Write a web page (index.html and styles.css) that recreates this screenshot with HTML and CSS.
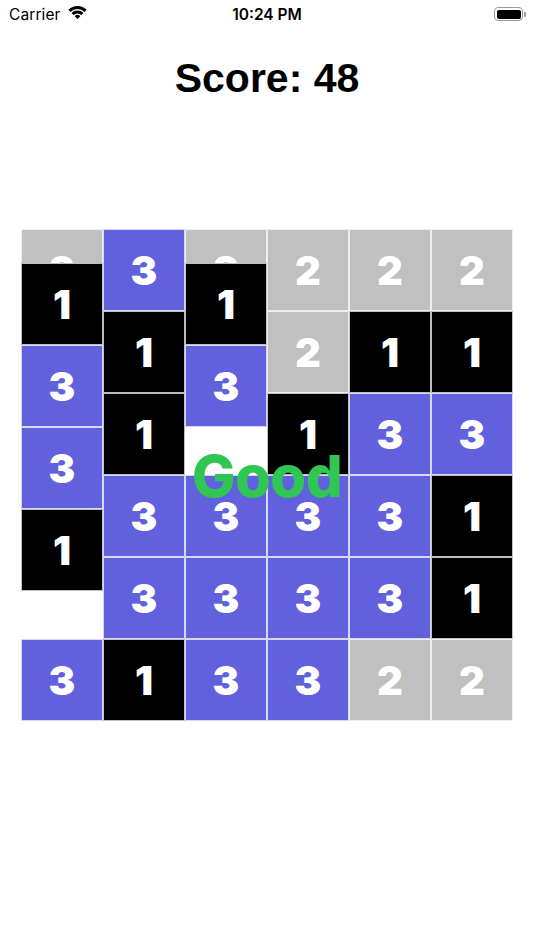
FILE: index.html
```html
<!DOCTYPE html>
<html>
<head>
<meta charset="utf-8">
<link rel="stylesheet" href="styles.css">
</head>
<body>
<div class="status">
  <div class="carrier">Carrier
    <svg class="wifi" width="19" height="15" viewBox="-0.5 0 19 15">
      <path d="M9 14 L6.17 11.17 A4 4 0 0 1 11.83 11.17 Z" fill="#000"/>
      <path d="M2.99 7.99 A8.5 8.5 0 0 1 15.01 7.99 L12.89 10.11 A5.5 5.5 0 0 0 5.11 10.11 Z" fill="#000"/>
      <path d="M-0.19 4.81 A13 13 0 0 1 18.19 4.81 L16.07 6.93 A10 10 0 0 0 1.93 6.93 Z" fill="#000"/>
    </svg>
  </div>
  <div class="time">10:24 PM</div>
  <div class="battery">
    <div class="batt-body"><div class="batt-fill"></div></div>
    <div class="batt-nub"></div>
  </div>
</div>
<h1 class="title">Score: 48</h1>
<div class="board">
  <div class="col">
    <div class="tile gray">2</div>
    <div class="tile black drop">1</div>
    <div class="tile blue">3</div>
    <div class="tile blue">3</div>
    <div class="tile black">1</div>
    <div class="gap"></div>
    <div class="tile blue">3</div>
  </div>
  <div class="col">
    <div class="tile blue">3</div>
    <div class="tile black">1</div>
    <div class="tile black">1</div>
    <div class="tile blue">3</div>
    <div class="tile blue">3</div>
    <div class="tile black">1</div>
  </div>
  <div class="col">
    <div class="tile gray">2</div>
    <div class="tile black drop">1</div>
    <div class="tile blue">3</div>
    <div class="gap"></div>
    <div class="tile blue">3</div>
    <div class="tile blue">3</div>
    <div class="tile blue">3</div>
  </div>
  <div class="col">
    <div class="tile gray">2</div>
    <div class="tile gray">2</div>
    <div class="tile black">1</div>
    <div class="tile blue">3</div>
    <div class="tile blue">3</div>
    <div class="tile blue">3</div>
  </div>
  <div class="col">
    <div class="tile gray">2</div>
    <div class="tile black">1</div>
    <div class="tile blue">3</div>
    <div class="tile blue">3</div>
    <div class="tile blue">3</div>
    <div class="tile gray">2</div>
  </div>
  <div class="col">
    <div class="tile gray">2</div>
    <div class="tile black">1</div>
    <div class="tile blue">3</div>
    <div class="tile black">1</div>
    <div class="tile black">1</div>
    <div class="tile gray">2</div>
  </div>
  <div class="praise">Good</div>
</div>
</body>
</html>
```
FILE: styles.css
```css
html, body {
  margin: 0;
  padding: 0;
  background: #fff;
}
body {
  width: 534px;
  height: 950px;
  font-family: "Liberation Sans", Arial, sans-serif;
  color: #000;
  overflow: hidden;
}
.status {
  height: 28px;
  display: flex;
  align-items: center;
  justify-content: space-between;
  padding: 0 8px 0 9px;
  position: relative;
}
.carrier {
  font-size: 15.5px;
  display: flex;
  align-items: center;
  gap: 7px;
  letter-spacing: 0.1px;
  font-family: "Inter", "Liberation Sans", sans-serif;
}
.wifi {
  margin-top: -3px;
}
.time {
  position: absolute;
  left: 0;
  right: 0;
  text-align: center;
  font-size: 15.5px;
  font-weight: 600;
  font-family: "Inter", "Liberation Sans", sans-serif;
}
.battery {
  display: flex;
  align-items: center;
  gap: 1px;
}
.batt-body {
  border: 1px solid #9a9a9a;
  border-radius: 4px;
  padding: 1.5px;
  box-sizing: border-box;
  width: 29px;
  height: 14px;
}
.batt-fill {
  width: 100%;
  height: 100%;
  background: #000;
  border-radius: 2px;
}
.batt-nub {
  width: 2px;
  height: 5px;
  background: #9a9a9a;
  border-radius: 0 1px 1px 0;
}
.title {
  margin: 25px 0 0;
  text-align: center;
  font-size: 41px;
  line-height: 50px;
  font-weight: 700;
}
.board {
  position: relative;
  width: 492px;
  height: 492px;
  margin: 126px auto 0;
  display: grid;
  grid-template-columns: repeat(6, 82px);
}
.col {
  display: flex;
  flex-direction: column;
  height: 492px;
}
.tile {
  position: relative;
  flex: 0 0 82px;
  height: 82px;
  box-sizing: border-box;
  border: 0.5px solid rgba(255, 255, 255, 0.75);
  display: flex;
  align-items: center;
  justify-content: center;
  color: #fff;
  font-family: "Inter", "Liberation Sans", sans-serif;
  font-weight: 900;
  font-size: 40px;
  padding-top: 1px;
}
.tile.drop {
  margin-top: -48px;
}
.gap {
  flex: 0 0 48px;
}
.gray { background: #c0c0c0; }
.black { background: #000; }
.blue { background: #6160dd; }
.praise {
  position: absolute;
  left: 0;
  right: 0;
  top: 0;
  bottom: 0;
  display: flex;
  align-items: center;
  justify-content: center;
  color: #2fc653;
  font-family: "Inter", "Liberation Sans", sans-serif;
  font-size: 58px;
  font-weight: 800;
  letter-spacing: -0.6px;
  z-index: 2;
  padding-top: 2px;
}
```
